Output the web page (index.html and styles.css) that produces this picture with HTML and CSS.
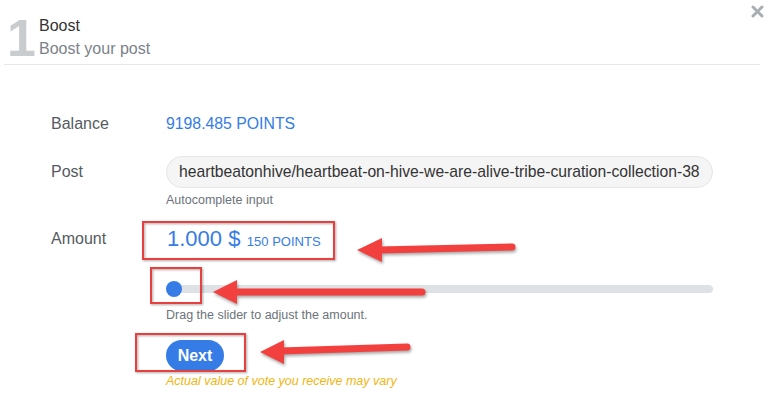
FILE: index.html
```html
<!DOCTYPE html>
<html lang="en">
<head>
    <meta charset="UTF-8">
    <meta name="viewport" content="width=device-width, initial-scale=1.0">
    <title>Boost</title>
    <link rel="stylesheet" href="styles.css">
</head>
<body>
    <div class="dialog">
        <div class="header">
            <span class="step">1</span>
            <div class="titles">
                <div class="title">Boost</div>
                <div class="subtitle">Boost your post</div>
            </div>
            <button class="close" aria-label="Close">
                <svg width="13" height="13" viewBox="0 0 13 13">
                    <path d="M2 2 L11 11 M11 2 L2 11" stroke="#a9aeb3" stroke-width="3" stroke-linecap="round"/>
                </svg>
            </button>
        </div>

        <div class="form">
            <div class="label row-balance">Balance</div>
            <div class="balance row-balance">9198.485 POINTS</div>

            <div class="label row-post">Post</div>
            <div class="row-post">
                <input class="post-input" type="text" value="heartbeatonhive/heartbeat-on-hive-we-are-alive-tribe-curation-collection-383" readonly>
                <div class="hint">Autocomplete input</div>
            </div>

            <div class="label row-amount">Amount</div>
            <div class="row-amount">
                <div class="amount"><span class="usd">1.000 $</span> <span class="points">150 POINTS</span></div>
                <div class="slider">
                    <div class="track"></div>
                    <div class="thumb"></div>
                </div>
                <div class="hint drag">Drag the slider to adjust the amount.</div>
                <button class="next">Next</button>
                <div class="warning">Actual value of vote you receive may vary</div>
            </div>
        </div>

        <svg class="marks" width="768" height="409" viewBox="0 0 768 409">
            <g class="boxes">
                <rect x="143" y="222" width="191" height="37"/>
                <rect x="151" y="268" width="50" height="35"/>
                <rect x="136" y="334" width="109" height="37"/>
            </g>
            <g class="arrows">
                <line x1="378" y1="250" x2="512" y2="247"/>
                <polygon points="357,250 382,238 382,262"/>
                <line x1="234" y1="292" x2="422" y2="292"/>
                <polygon points="213,292 237,280 237,304"/>
                <line x1="280" y1="351" x2="407" y2="347"/>
                <polygon points="260,352 284,340 284,364"/>
            </g>
        </svg>
    </div>
</body>
</html>
```

FILE: styles.css
```css
body {
    margin: 0;
    background-color: white;
    font-family: "Liberation Sans", Arial, sans-serif;
    color: #333;
}
.dialog {
    position: relative;
    width: 768px;
    height: 409px;
    overflow: hidden;
}
.header {
    display: flex;
    align-items: flex-start;
    height: 65px;
    margin: 0 8px 0 4px;
    border-bottom: 1px solid #e6e8ea;
    box-sizing: border-box;
}
.step {
    font-size: 52px;
    font-weight: bold;
    color: #c9cccf;
    line-height: 1;
    margin: 12px 0 0 3px;
    width: 32px;
}
.titles {
    padding-top: 16px;
}
.title {
    font-size: 16px;
    color: #333;
    line-height: 20px;
}
.subtitle {
    font-size: 16px;
    color: #7b828a;
    line-height: 20px;
    margin-top: 3px;
}
.close {
    margin-left: auto;
    margin-top: 5px;
    margin-right: -4px;
    padding: 0;
    border: none;
    background: none;
}
.form {
    display: grid;
    grid-template-columns: 115px 547px;
    padding: 47px 0 0 51px;
}
.label {
    font-size: 16px;
    color: #555b61;
}
.row-balance {
    line-height: 24px;
}
.balance {
    font-size: 15.8px;
    color: #357ce6;
}
.row-post {
    margin-top: 20px;
}
.label.row-post {
    line-height: 32px;
}
.post-input {
    display: block;
    width: 100%;
    height: 32px;
    box-sizing: border-box;
    border: 1px solid #e6e6e6;
    border-radius: 16px;
    background-color: #f5f5f5;
    padding: 0 12px;
    font-family: inherit;
    font-size: 15.7px;
    color: #333;
    outline: none;
}
.hint {
    font-size: 12.5px;
    color: #6c737a;
    line-height: 16px;
    margin-top: 4px;
}
.row-amount {
    margin-top: 18px;
}
.label.row-amount {
    line-height: 26px;
}
.amount {
    line-height: 26px;
    color: #357ce6;
    padding-left: 1px;
}
.usd {
    font-size: 22px;
}
.points {
    font-size: 13px;
    margin-left: 2px;
}
.slider {
    position: relative;
    height: 16px;
    margin-top: 26px;
}
.track {
    position: absolute;
    left: 0;
    right: 0;
    top: 4px;
    height: 8px;
    border-radius: 4px;
    background-color: #dee1e5;
}
.thumb {
    position: absolute;
    left: 0;
    top: 0;
    width: 16px;
    height: 16px;
    border-radius: 50%;
    background-color: #357ce6;
}
.drag {
    margin-top: 10px;
}
.next {
    display: block;
    margin-top: 17px;
    height: 31px;
    width: 58px;
    border: none;
    border-radius: 16px;
    background-color: #357ce6;
    color: white;
    font-family: inherit;
    font-size: 16px;
    font-weight: bold;
    padding: 0;
}
.warning {
    font-size: 12.5px;
    font-style: italic;
    color: #f2b50f;
    line-height: 16px;
    margin-top: 2px;
}
.marks {
    position: absolute;
    left: 0;
    top: 0;
    pointer-events: none;
}
.boxes rect {
    fill: none;
    stroke: #e8403f;
    stroke-width: 2;
    filter: drop-shadow(1px 1px 1px rgba(0, 0, 0, 0.35));
}
.arrows {
    filter: drop-shadow(1px 2px 1.5px rgba(0, 0, 0, 0.35));
}
.arrows line {
    stroke: #f2403f;
    stroke-width: 7;
    stroke-linecap: round;
}
.arrows polygon {
    fill: #f2403f;
}
```
